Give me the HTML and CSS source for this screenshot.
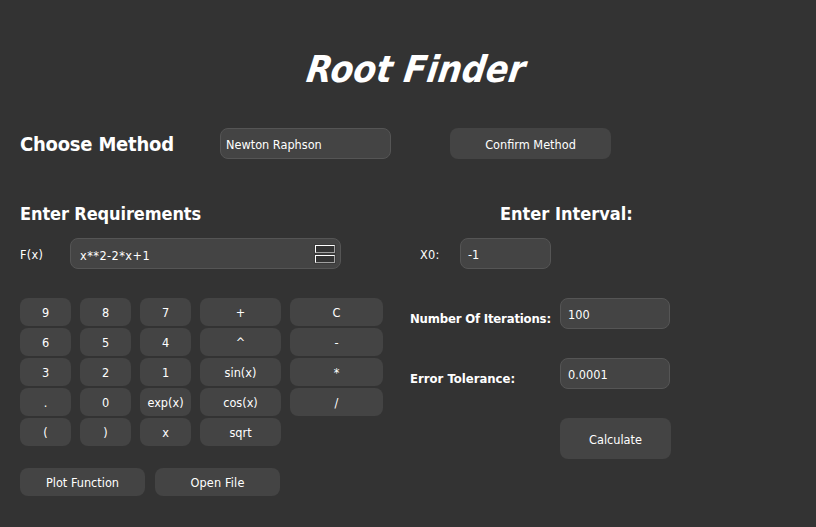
FILE: index.html
```html
<!DOCTYPE html>
<html lang="en">
<head>
<meta charset="utf-8">
<title>Root Finder</title>
<link rel="stylesheet" href="styles.css">
</head>
<body>
<main class="app">
  <h1 class="title"><span class="slant">Root Finder</span></h1>
  <section class="method">
    <h2 class="method-label">Choose Method</h2>
    <div class="field select">Newton Raphson</div>
    <button class="btn confirm">Confirm Method</button>
  </section>
  <div class="columns">
    <section class="left">
      <h3 class="heading requirements">Enter Requirements</h3>
      <div class="row">
        <label class="fx-label">F(x)</label>
        <div class="field fx"><span class="expression">x**2-2*x+1</span>
          <div class="steps"><i class="step"></i><i class="step"></i></div>
        </div>
      </div>
      <div class="keys">
        <button class="btn">9</button><button class="btn">8</button><button class="btn">7</button><button class="btn">+</button><button class="btn">C</button>
        <button class="btn">6</button><button class="btn">5</button><button class="btn">4</button><button class="btn">^</button><button class="btn">-</button>
        <button class="btn">3</button><button class="btn">2</button><button class="btn">1</button><button class="btn">sin(x)</button><button class="btn">*</button>
        <button class="btn">.</button><button class="btn">0</button><button class="btn">exp(x)</button><button class="btn">cos(x)</button><button class="btn">/</button>
        <button class="btn">(</button><button class="btn">)</button><button class="btn">x</button><button class="btn">sqrt</button>
      </div>
      <div class="actions">
        <button class="btn">Plot Function</button>
        <button class="btn open">Open File</button>
      </div>
    </section>
    <section class="right">
      <h3 class="heading interval">Enter Interval:</h3>
      <div class="row x0-row">
        <label class="x0-label">X0:</label>
        <div class="field x0">-1</div>
      </div>
      <div class="setting">
        <label class="iterations">Number Of Iterations:</label>
        <div class="field">100</div>
      </div>
      <div class="setting">
        <label>Error Tolerance:</label>
        <div class="field">0.0001</div>
      </div>
      <button class="btn calculate">Calculate</button>
    </section>
  </div>
</main>
</body>
</html>
```
FILE: styles.css
```css
* { box-sizing: border-box; }
body {
  margin: 0;
  background: #333;
  color: #fff;
  font: 12.6px/16px "DejaVu Sans Condensed", "DejaVu Sans", sans-serif;
  font-stretch: condensed;
  white-space: nowrap;
}
h1, h2, h3 { margin: 0; }
.app { height: 527px; padding: 0 20px; overflow: hidden; }
.title { height: 128px; padding: 48px 0 0 287px; font-size: 37px; line-height: 44px; font-style: italic; letter-spacing: .05px; }
.slant { display: inline-block; transform: skewX(-8deg); }
.method { display: flex; height: 70px; }
.method-label { width: 200px; font-size: 20px; line-height: 32px; letter-spacing: -.22px; }
.field {
  display: flex;
  align-items: center;
  height: 31px;
  padding: 2px 7px 0;
  background: #444;
  border: 1px solid #555;
  border-radius: 8px;
}
.select { width: 171px; padding-left: 5px; margin-right: 59px; }
.btn {
  display: flex;
  align-items: center;
  justify-content: center;
  padding: 1px 0 0;
  border: 0;
  border-radius: 8px;
  background: #444;
  color: #fff;
  font: inherit;
}
.confirm { width: 161px; height: 31px; padding-top: 2px; }
.columns { display: flex; }
.left { width: 390px; }
.heading { height: 40px; font-size: 18px; line-height: 31px; }
.requirements { letter-spacing: -.1px; }
.row { display: flex; height: 60px; }
.row label { line-height: 34px; letter-spacing: .25px; }
.fx-label { width: 50px; }
.fx { width: 271px; padding: 3px 5px 0 9px; justify-content: space-between; }
.expression { letter-spacing: .45px; padding-top: 1px; }
.steps { display: grid; gap: 2px; margin-top: -3px; }
.step {
  width: 20px;
  height: 8px;
  background: #333;
  border: 1px solid #fff;
  border-right-color: #a0a0a0;
  border-bottom-color: #a0a0a0;
  box-shadow: 0 0 0 1px #3a3a3a;
}
.keys {
  display: grid;
  grid-template-columns: 51px 51px 51px 81px 93px;
  grid-auto-rows: 28px;
  gap: 2px 9px;
}
.actions { display: grid; grid-template-columns: 125px 125px; grid-auto-rows: 28px; gap: 10px; margin-top: 22px; }
.open { letter-spacing: .15px; }
.right { width: 270px; }
.interval { padding-left: 90px; }
.x0-row { padding-left: 10px; }
.x0-label { width: 40px; }
.x0 { width: 91px; }
.setting { display: flex; height: 60px; }
.setting label { width: 150px; font-size: 13px; font-weight: bold; line-height: 41px; }
.setting .iterations { letter-spacing: -.18px; }
.setting .field { width: 110px; }
.calculate { width: 111px; height: 41px; margin-left: 150px; padding-top: 2px; }
```
